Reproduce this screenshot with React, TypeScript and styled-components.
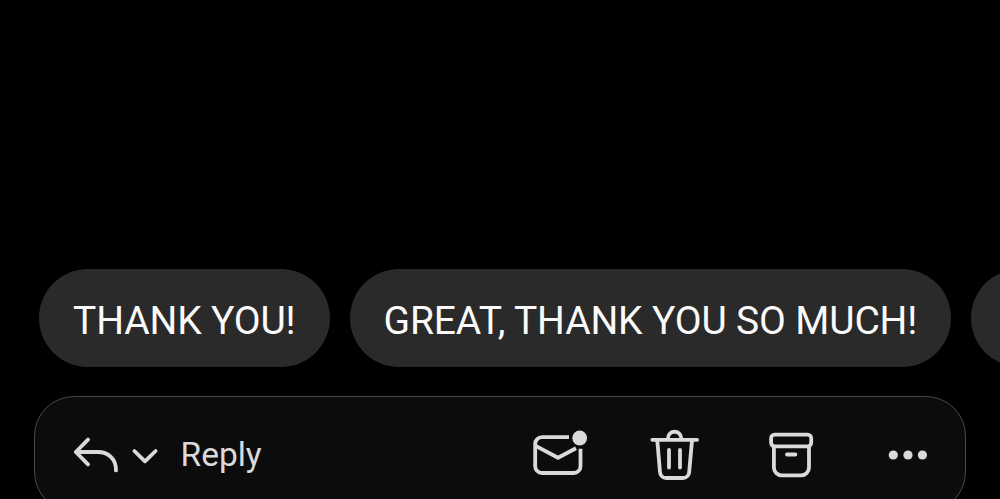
import styled, { createGlobalStyle } from 'styled-components';

const suggestions = ['THANK YOU!', 'GREAT, THANK YOU SO MUCH!'];

const App = () => {
  return (
    <>
      <GlobalStyle />
      <Screen>
        <SuggestionRow>
          {suggestions.map((text) => (
            <Chip key={text}>{text}</Chip>
          ))}
          <EmptyChip />
        </SuggestionRow>
        <ActionBar>
          <ReplyButton aria-label="Reply">
            <Icon $width={50} $height={40} viewBox="0 0 50 40">
              <path d="M18 5.6 L5.8 18 L18 30.4 M5.8 18 H27.5 C38.5 18 46 25 46 36.4" />
            </Icon>
            <Chevron $width={30} $height={40} viewBox="0 0 30 40">
              <path d="M4.4 17 L15 27.3 L25.6 17" />
            </Chevron>
            <span>Reply</span>
          </ReplyButton>
          <Actions>
            <IconButton aria-label="Mark as unread">
              <Icon $width={60} $height={60} viewBox="0 0 60 60">
                <g>
                  <path d="M39 13.2 H12 A6.8 6.8 0 0 0 5.2 20 V42.2 A6.8 6.8 0 0 0 12 49 H43.7 A6.8 6.8 0 0 0 50.5 42.2 V24.8" />
                  <path d="M5.2 21.6 L28 33.8 L46 24.2" />
                </g>
                <circle className="fill" cx="49.7" cy="14" r="7.4" />
              </Icon>
            </IconButton>
            <IconButton aria-label="Delete">
              <Icon $width={60} $height={60} viewBox="0 0 60 60">
                <path d="M6.3 15.8 H51.1" />
                <path d="M21.8 15.4 C21.8 5.2 35.4 5.2 35.4 15.4" />
                <path d="M11.3 16.5 L14 48 A6.2 6.2 0 0 0 20.2 54 H37 A6.2 6.2 0 0 0 43.2 48 L46 16.5" />
                <path d="M23 25.8 V43.6 M34 25.8 V43.6" />
              </Icon>
            </IconButton>
            <IconButton aria-label="Archive">
              <Icon $width={60} $height={60} viewBox="0 0 60 60">
                <rect x="9.1" y="10.6" width="40.1" height="11.8" rx="3.6" />
                <path d="M11.9 22.5 V43.4 A8 8 0 0 0 19.9 51.4 H39 A8 8 0 0 0 47 43.4 V22.5" />
                <path d="M25 30.5 H33.4" />
              </Icon>
            </IconButton>
            <IconButton aria-label="More">
              <Icon $width={60} $height={60} viewBox="0 0 60 60">
                <circle className="fill" cx="15.3" cy="31" r="4.6" />
                <circle className="fill" cx="30" cy="31" r="4.6" />
                <circle className="fill" cx="44.4" cy="31" r="4.6" />
              </Icon>
            </IconButton>
          </Actions>
        </ActionBar>
      </Screen>
    </>
  );
};

export default App;

const GlobalStyle = createGlobalStyle`
  * {
    box-sizing: border-box;
  }

  body {
    margin: 0;
    background-color: #000;
    font-family: Roboto, sans-serif;
  }

  button {
    border: 0;
    padding: 0;
    background: none;
    font-family: inherit;
  }
`;

const Screen = styled.div`
  width: 100%;
  height: 100vh;
  padding-top: 269px;
  overflow: hidden;
  background-color: #000;
`;

const SuggestionRow = styled.div`
  display: flex;
  gap: 20px;
  padding-left: 39px;
  overflow: hidden;
`;

const Chip = styled.button`
  flex: none;
  height: 97.5px;
  padding: 6.5px 34px 0;
  border-radius: 49px;
  background-color: #2a2a2a;
  color: #fafafa;
  font-size: 39px;
  line-height: 46px;
  letter-spacing: -0.14px;
  white-space: nowrap;
`;

const EmptyChip = styled(Chip)`
  width: 240px;
`;

const ActionBar = styled.div`
  height: 116px;
  margin: 29.5px 34px 0;
  padding: 0 27px 0 35px;
  border: 1px solid #484848;
  border-radius: 40px;
  background-color: #0c0c0c;
  display: flex;
  align-items: center;
  justify-content: space-between;
`;

const ReplyButton = styled.button`
  display: flex;
  align-items: center;
  color: #dadada;
  font-size: 33.5px;
  line-height: 40px;

  span {
    margin-left: 21px;
    padding-top: 2px;
  }
`;

const Icon = styled.svg<{ $width: number; $height: number }>`
  display: block;
  width: ${({ $width }) => $width}px;
  height: ${({ $height }) => $height}px;
  fill: none;
  stroke: #dadada;
  stroke-width: 3.8;
  stroke-linecap: round;
  stroke-linejoin: round;

  .fill {
    fill: #dadada;
    stroke: none;
  }

  /* envelope lines are cut straight around the badge */
  g {
    stroke-linecap: butt;
    stroke-linejoin: miter;
  }
`;

const Chevron = styled(Icon)`
  margin-left: 9.5px;
`;

const Actions = styled.div`
  display: flex;
  gap: 56px;
`;

const IconButton = styled.button`
  width: 60px;
  height: 60px;
`;
